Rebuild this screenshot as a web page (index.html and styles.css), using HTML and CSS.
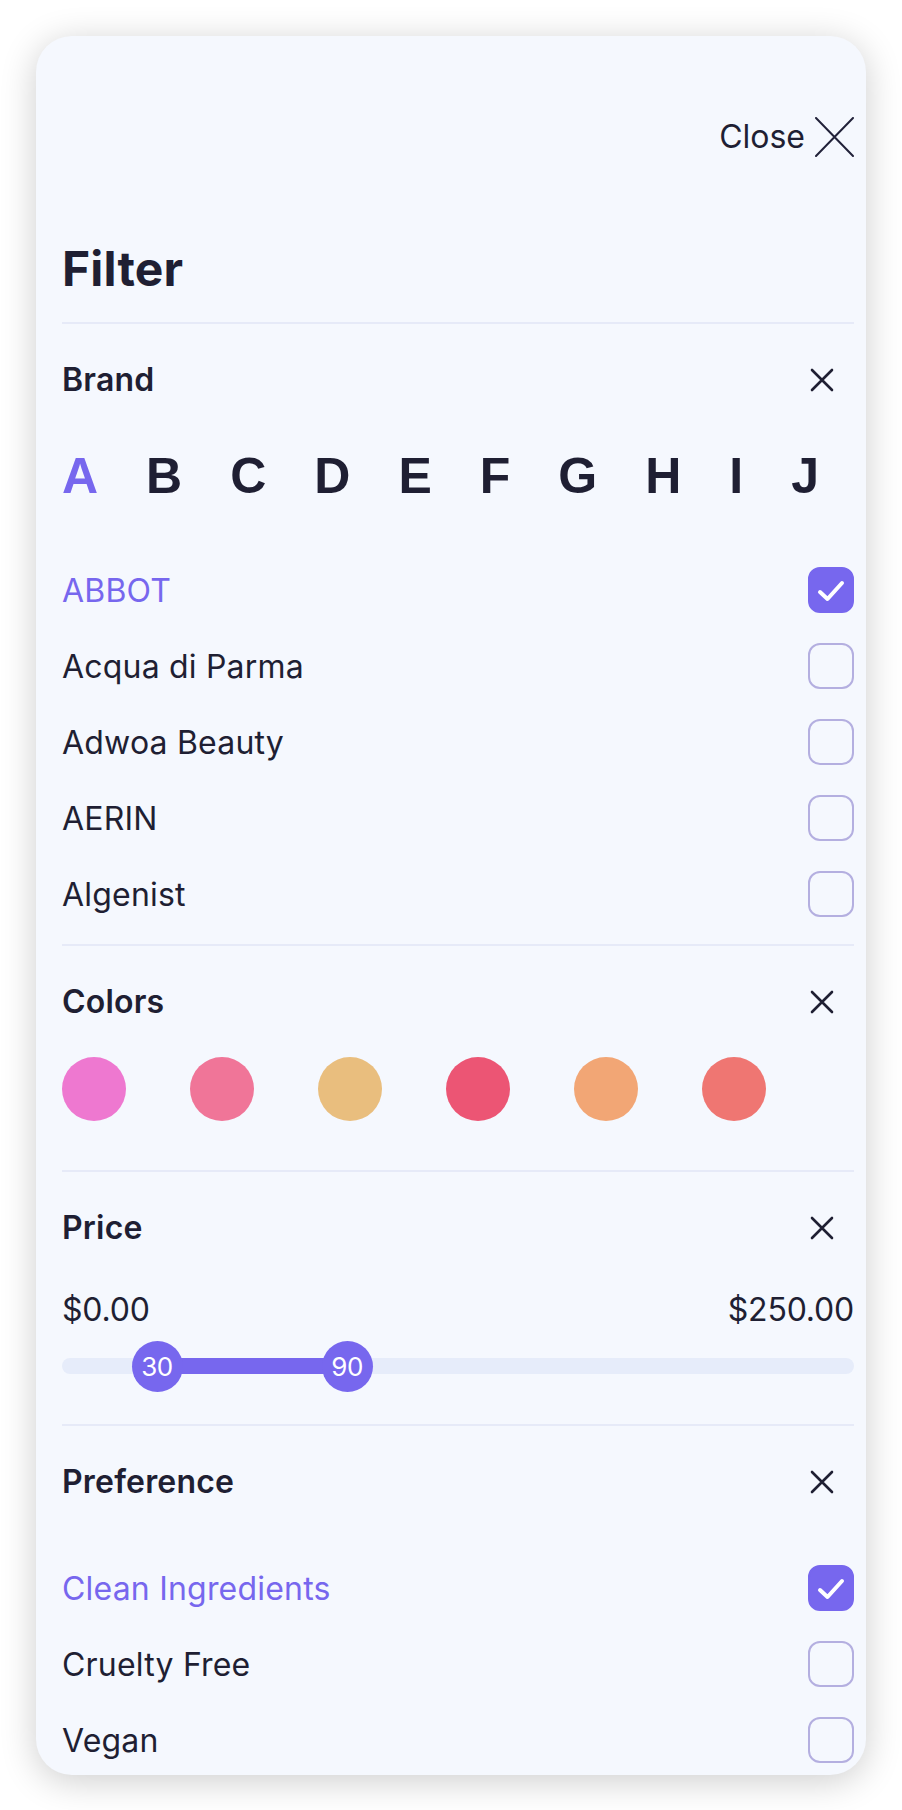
FILE: index.html
```html
<!DOCTYPE html>
<html lang="en">
<head>
<meta charset="utf-8">
<title>Filter</title>
<link rel="stylesheet" href="styles.css">
</head>
<body>
<div class="card">
  <div class="close-row">
    <span class="close-label">Close</span>
    <svg class="close-icon" width="39" height="40" viewBox="0 0 39 40"><path d="M1 1 L38 39 M38 1 L1 39" stroke="#22223a" stroke-width="2" fill="none" stroke-linecap="round"/></svg>
  </div>
  <h1 class="title">Filter</h1>

  <section class="section">
    <div class="sec-head">
      <h2 class="sec-title">Brand</h2>
      <svg class="x-icon" width="24" height="24" viewBox="0 0 24 24"><path d="M2 2 L22 22 M22 2 L2 22" stroke="#1f1f33" stroke-width="2.6" fill="none" stroke-linecap="round"/></svg>
    </div>
    <div class="alpha">
      <span class="letter active">A</span>
      <span class="letter">B</span>
      <span class="letter">C</span>
      <span class="letter">D</span>
      <span class="letter">E</span>
      <span class="letter">F</span>
      <span class="letter">G</span>
      <span class="letter">H</span>
      <span class="letter">I</span>
      <span class="letter">J</span>
    </div>
    <ul class="list brand-list">
      <li class="item checked"><span>ABBOT</span><span class="box"><svg width="46" height="46" viewBox="0 0 46 46"><path d="M12 25 L19.5 32 L34 16" stroke="#fff" stroke-width="4" fill="none" stroke-linecap="round" stroke-linejoin="round"/></svg></span></li>
      <li class="item"><span>Acqua di Parma</span><span class="box"></span></li>
      <li class="item"><span>Adwoa Beauty</span><span class="box"></span></li>
      <li class="item"><span>AERIN</span><span class="box"></span></li>
      <li class="item"><span>Algenist</span><span class="box"></span></li>
    </ul>
  </section>

  <section class="section">
    <div class="sec-head">
      <h2 class="sec-title">Colors</h2>
      <svg class="x-icon" width="24" height="24" viewBox="0 0 24 24"><path d="M2 2 L22 22 M22 2 L2 22" stroke="#1f1f33" stroke-width="2.6" fill="none" stroke-linecap="round"/></svg>
    </div>
    <div class="swatches">
      <span class="swatch c1"></span>
      <span class="swatch c2"></span>
      <span class="swatch c3"></span>
      <span class="swatch c4"></span>
      <span class="swatch c5"></span>
      <span class="swatch c6"></span>
    </div>
  </section>

  <section class="section">
    <div class="sec-head">
      <h2 class="sec-title">Price</h2>
      <svg class="x-icon" width="24" height="24" viewBox="0 0 24 24"><path d="M2 2 L22 22 M22 2 L2 22" stroke="#1f1f33" stroke-width="2.6" fill="none" stroke-linecap="round"/></svg>
    </div>
    <div class="range-labels"><span>$0.00</span><span>$250.00</span></div>
    <div class="track">
      <div class="fill" style="left:12%; width:24%"></div>
      <span class="handle" style="left:12%">30</span>
      <span class="handle" style="left:36%">90</span>
    </div>
  </section>

  <section class="section last">
    <div class="sec-head">
      <h2 class="sec-title">Preference</h2>
      <svg class="x-icon" width="24" height="24" viewBox="0 0 24 24"><path d="M2 2 L22 22 M22 2 L2 22" stroke="#1f1f33" stroke-width="2.6" fill="none" stroke-linecap="round"/></svg>
    </div>
    <ul class="list pref-list">
      <li class="item checked"><span>Clean Ingredients</span><span class="box"><svg width="46" height="46" viewBox="0 0 46 46"><path d="M12 25 L19.5 32 L34 16" stroke="#fff" stroke-width="4" fill="none" stroke-linecap="round" stroke-linejoin="round"/></svg></span></li>
      <li class="item"><span>Cruelty Free</span><span class="box"></span></li>
      <li class="item"><span>Vegan</span><span class="box"></span></li>
    </ul>
  </section>
</div>
</body>
</html>
```

FILE: styles.css
```css
* { box-sizing: border-box; }
html, body { margin: 0; padding: 0; background: #ffffff; }
body {
  font-family: Inter, "Liberation Sans", Arial, sans-serif;
  color: #1f1f33;
  padding: 36px 36px 35px 36px;
}
.card {
  width: 830px;
  height: 1739px;
  overflow: hidden;
  background: #f5f8fe;
  border-radius: 36px;
  box-shadow: 0 6px 36px rgba(0, 0, 0, 0.2);
  padding: 81px 12px 0 26px;
}
.close-row {
  display: flex;
  justify-content: flex-end;
  align-items: center;
  gap: 10px;
  height: 40px;
}
.close-label {
  font-size: 32px;
  line-height: 40px;
  color: #1f1f33;
}
.close-icon { display: block; }
.title {
  margin: 84px 0 0 0;
  font-size: 48px;
  line-height: 56px;
  font-weight: 700;
  letter-spacing: 0.2px;
  padding-bottom: 25px;
  border-bottom: 2px solid #e6eaf8;
}
.section {
  padding-top: 33px;
  border-bottom: 2px solid #e6eaf8;
}
.section.last { border-bottom: none; }
.sec-head {
  display: flex;
  justify-content: space-between;
  align-items: center;
  height: 46px;
}
.sec-title {
  margin: 0;
  font-size: 32px;
  font-weight: 600;
  line-height: 46px;
  letter-spacing: 0.2px;
}
.x-icon { margin-right: 20px; display: block; }
.alpha {
  display: flex;
  gap: 48px;
  margin-top: 43px;
  height: 60px;
  align-items: center;
  font-family: "Liberation Sans", Arial, sans-serif;
  font-weight: 700;
  font-size: 50px;
  line-height: 60px;
}
.letter.active { color: #7767ee; }
.list {
  list-style: none;
  margin: 0;
  padding: 0;
}
.brand-list { margin-top: 46px; padding-bottom: 12px; }
.pref-list { margin-top: 45px; }
.item {
  display: flex;
  justify-content: space-between;
  align-items: center;
  height: 76px;
  font-size: 32px;
  letter-spacing: 0.2px;
}
.item.checked { color: #7767ee; }
.box {
  width: 46px;
  height: 46px;
  border-radius: 12px;
  border: 2px solid #b4afe0;
  display: block;
  flex: none;
}
.item.checked .box {
  background: #7767ee;
  border-color: #7767ee;
}
.box svg { display: block; margin: -2px; }
.swatches {
  display: flex;
  gap: 64px;
  margin-top: 32px;
  padding-bottom: 49px;
}
.swatch {
  width: 64px;
  height: 64px;
  border-radius: 50%;
  display: block;
}
.c1 { background: #ee78d0; }
.c2 { background: #f07598; }
.c3 { background: #e9be7e; }
.c4 { background: #ec5574; }
.c5 { background: #f2a675; }
.c6 { background: #ef7672; }
.range-labels {
  display: flex;
  justify-content: space-between;
  margin-top: 39px;
  font-size: 32px;
  line-height: 40px;
  letter-spacing: -0.2px;
}
.track {
  position: relative;
  margin-top: 28px;
  margin-bottom: 50px;
  height: 16px;
  border-radius: 8px;
  background: #e6ecfa;
}
.fill {
  position: absolute;
  top: 0;
  height: 16px;
  background: #7767ee;
}
.handle {
  position: absolute;
  top: 50%;
  width: 51px;
  height: 51px;
  margin-left: -25.5px;
  margin-top: -25.5px;
  border-radius: 50%;
  background: #7767ee;
  color: #ffffff;
  font-size: 26px;
  display: flex;
  align-items: center;
  justify-content: center;
  letter-spacing: -0.5px;
}
```
